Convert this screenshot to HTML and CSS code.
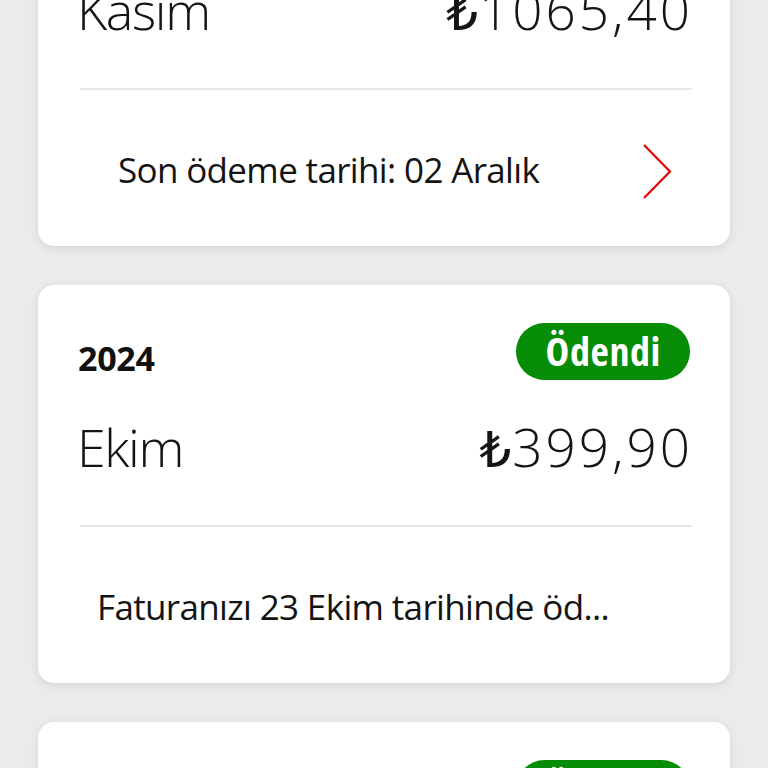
FILE: index.html
```html
<!DOCTYPE html>
<html lang="tr">
<head>
<meta charset="utf-8">
<link rel="stylesheet" href="styles.css">
</head>
<body>
<main class="bill-list">
  <section class="card">
    <div class="card-head">
      <span class="year">2024</span>
      <span class="pill pill-due">Ödenmedi</span>
    </div>
    <div class="card-amount">
      <span class="month">Kasım</span>
      <span class="amount"><span class="tl">₺</span>1065,40</span>
    </div>
    <div class="divider"></div>
    <a class="card-foot card-foot-link" href="#">
      <span class="foot-text">Son ödeme tarihi: 02 Aralık</span>
      <svg class="chevron" width="32" height="58" viewBox="0 0 32 58" aria-hidden="true">
        <path d="M3 2 L29 28.5 L3 55" fill="none" stroke="#e60000" stroke-width="2.2" stroke-linejoin="miter"/>
      </svg>
    </a>
  </section>

  <section class="card">
    <div class="card-head">
      <span class="year">2024</span>
      <span class="pill">Ödendi</span>
    </div>
    <div class="card-amount">
      <span class="month">Ekim</span>
      <span class="amount"><span class="tl">₺</span>399,90</span>
    </div>
    <div class="divider"></div>
    <div class="card-foot card-foot-plain">
      <span class="foot-text">Faturanızı 23 Ekim tarihinde öd...</span>
    </div>
  </section>

  <section class="card">
    <div class="card-head">
      <span class="year">2024</span>
      <span class="pill">Ödendi</span>
    </div>
    <div class="card-amount">
      <span class="month">Eylül</span>
      <span class="amount"><span class="tl">₺</span>399,90</span>
    </div>
    <div class="divider"></div>
    <div class="card-foot card-foot-plain">
      <span class="foot-text">Faturanızı 24 Eylül tarihinde öd...</span>
    </div>
  </section>
</main>
</body>
</html>
```
FILE: styles.css
```css
html, body {
  margin: 0;
  padding: 0;
  background: #ebebeb;
}

body {
  font-family: "Open Sans", "Noto Sans", "DejaVu Sans", sans-serif;
  color: #141414;
  overflow: hidden;
}

.bill-list {
  display: flex;
  flex-direction: column;
  gap: 39px;
  padding: 0 38px;
  margin-top: -152px;
}

.card {
  background: #ffffff;
  border-radius: 16px;
  box-shadow: 0 2px 10px rgba(0, 0, 0, 0.10);
  display: flex;
  flex-direction: column;
}

.card-head {
  display: flex;
  justify-content: space-between;
  align-items: flex-start;
  padding: 38px 40px 0 40px;
  height: 57px;
}

.year {
  font-weight: 700;
  font-size: 34px;
  line-height: 57px;
  margin-top: 7px;
  letter-spacing: -0.3px;
  color: #111;
}

.pill {
  background: #078c07;
  color: #ffffff;
  font-weight: 700;
  font-stretch: 75%;
  font-size: 40px;
  letter-spacing: 0.6px;
  height: 57px;
  line-height: 55px;
  padding: 0 29px 0 30px;
  border-radius: 29px;
  box-sizing: border-box;
}

.pill-due {
  background: #e60000;
}

.card-amount {
  display: flex;
  justify-content: space-between;
  align-items: baseline;
  padding: 35px 40px 0 39px;
  height: 64px;
}

.month {
  font-weight: 300;
  font-size: 52px;
  line-height: 64px;
  letter-spacing: -1.4px;
}

.amount {
  font-weight: 300;
  font-size: 53px;
  line-height: 64px;
  letter-spacing: 3px;
  margin-right: -3px;
}

.tl {
  font-family: "DejaVu Sans", sans-serif;
  font-weight: 400;
  font-size: 50px;
  letter-spacing: 1px;
}

.divider {
  height: 2px;
  background: #e6e6e6;
  margin: 46px 38px 0 42px;
}

.card-foot {
  display: flex;
  align-items: center;
  justify-content: space-between;
  height: 156px;
  text-decoration: none;
  color: #141414;
}

.card-foot-link {
  padding: 0 57px 0 80px;
}

.card-foot-plain {
  padding: 0 40px 0 59px;
}

.foot-text {
  font-weight: 400;
  font-size: 35px;
  line-height: 44px;
  letter-spacing: -0.65px;
  margin-top: 4px;
}

.chevron {
  display: block;
  flex: none;
  margin-top: 8px;
}
```
